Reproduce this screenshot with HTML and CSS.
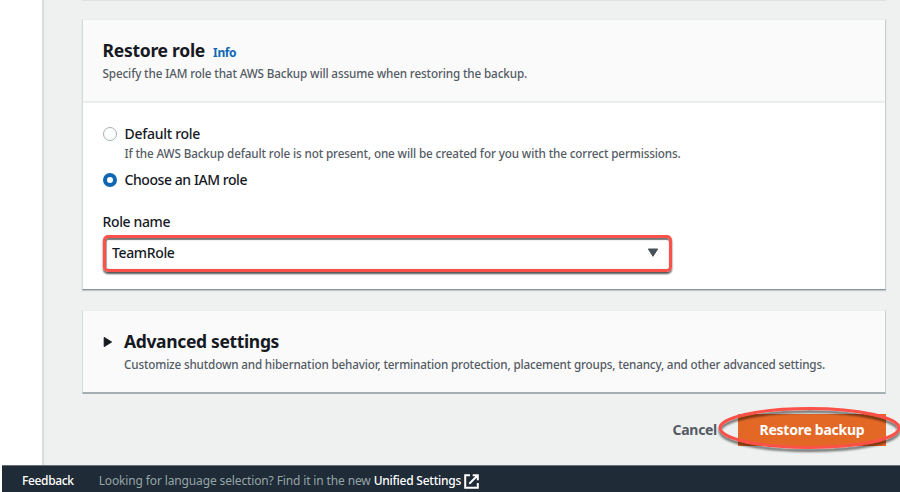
FILE: index.html
```html
<!DOCTYPE html>
<html lang="en">
<head>
<meta charset="utf-8">
<title>Restore backup</title>
<link rel="stylesheet" href="styles.css">
</head>
<body>
<div class="shell">
  <aside class="side"></aside>
  <main class="content">
    <div class="previous-edge"></div>
    <section class="panel role">
      <header class="panel-head">
        <div class="title-row"><h2>Restore role</h2><a class="info">Info</a></div>
        <p class="hint role-hint">Specify the IAM role that AWS Backup will assume when restoring the backup.</p>
      </header>
      <div class="panel-body">
        <div class="option"><span class="radio"></span><span class="label default-label">Default role</span></div>
        <p class="hint option-hint">If the AWS Backup default role is not present, one will be created for you with the correct permissions.</p>
        <div class="option"><span class="radio checked"></span><span class="label choose-label">Choose an IAM role</span></div>
        <div class="label field-label">Role name</div>
        <div class="select">
          <span class="label value">TeamRole</span>
          <svg width="12" height="10" viewBox="0 0 12 10"><path d="M1.3 1h9.4L6 8.3z" fill="#485058" stroke="#485058" stroke-linejoin="round"/></svg>
        </div>
      </div>
    </section>
    <section class="panel advanced">
      <svg class="caret" width="10" height="12" viewBox="0 0 10 12"><path d="M1.2 1.4v9.2L8.6 6z" fill="#16191f" stroke="#16191f" stroke-linejoin="round"/></svg>
      <div>
        <h2 class="adv-title">Advanced settings</h2>
        <p class="hint adv-hint">Customize shutdown and hibernation behavior, termination protection, placement groups, tenancy, and other advanced settings.</p>
      </div>
    </section>
    <div class="actions">
      <span class="cancel">Cancel</span>
      <div class="submit">
        <span class="submit-text">Restore backup</span>
        <svg class="ring" width="190" height="54" viewBox="0 0 190 54">
          <defs><filter id="shade" x="-10%" y="-20%" width="120%" height="150%"><feDropShadow dx="0" dy="3" stdDeviation="1" flood-color="#000" flood-opacity=".55"/></filter></defs>
          <ellipse cx="95.5" cy="25" rx="89.5" ry="19.4" fill="none" stroke="#fb5149" stroke-width="3" filter="url(#shade)"/>
        </svg>
      </div>
    </div>
  </main>
</div>
<footer class="footer">
  <span class="feedback">Feedback</span>
  <span class="language">Looking for language selection? Find it in the new</span>
  <span class="unified">Unified Settings</span>
  <svg class="external" width="15" height="15" viewBox="0 0 15 15" fill="none" stroke="#fff" stroke-width="2"><path d="M6 1.2H1.2v12.6h12.6V9"/><path d="M8.7 1.2h5.1v5.1M13.5 1.5L5.3 9.7"/></svg>
</footer>
</body>
</html>
```
FILE: styles.css
```css
* { box-sizing: border-box; }
body {
  margin: 0;
  width: 900px;
  height: 492px;
  overflow: hidden;
  background: #fff;
  color: #16191f;
  font: 500 14px/20px "Noto Sans", sans-serif;
}
h2, p { margin: 0; }
.shell { display: flex; height: 465px; }
.side { width: 44px; flex: none; border-right: 2px solid #d9dcdc; background: #fff; }
.content { flex: 1; background: #eff1f1; padding: 0 14px 0 38px; }
.previous-edge { height: 1px; background: #dfe1e1; margin-bottom: 18px; }
.panel {
  background: #fafafa;
  border-left: 1px solid #d5d9d9;
  border-right: 1px solid #c9cfcf;
  border-top: 1px solid #eaeded;
  border-bottom: 1px solid #879596;
  box-shadow: 0 1px 1px #c3c8ca;
}
.role { height: 271px; }
.panel-head { height: 83px; padding: 18px 20px 0 19.5px; border-bottom: 2px solid #eaeeee; }
.title-row { display: flex; align-items: baseline; gap: 8px; }
h2 { font-size: 17.5px; line-height: 24px; font-weight: 700; letter-spacing: -.27px; }
.info { font-size: 12px; font-weight: 700; color: #0f68b5; letter-spacing: -.35px; }
.hint { font-size: 11.7px; line-height: 18px; color: #545b64; white-space: nowrap; }
.role-hint { letter-spacing: -.13px; margin-top: 1px; }
.panel-body { background: #fff; height: 186px; padding: 21px 20px 0 19.5px; }
.option { display: flex; align-items: center; gap: 8px; height: 20px; }
.radio { width: 14px; height: 14px; border: 1px solid #a5b0b0; border-radius: 50%; background: #fff; }
.radio.checked { border: 4.5px solid #1166b4; }
.default-label { letter-spacing: -.27px; }
.choose-label { letter-spacing: -.43px; }
.option-hint { margin: 0 0 8px 22px; letter-spacing: -.125px; }
.field-label { margin-top: 22px; letter-spacing: -.37px; }
.select {
  display: flex;
  align-items: center;
  justify-content: space-between;
  width: 569px;
  height: 37px;
  margin: 3px 0 0 .5px;
  padding: 0 10px 1px 6px;
  border: 3px solid #fb5149;
  border-radius: 5px;
  box-shadow: 0 2px 2px #555, inset 0 2px 1px #777, inset 1px 0 1px #aaa;
}
.value { letter-spacing: -.36px; }
.advanced { display: flex; height: 84px; margin-top: 20px; padding: 18px 0 0 20px; border-bottom: 2px solid #a5aeb1; box-shadow: none; }
.caret { margin: 7px 11px 0 0; flex: none; }
.adv-title { letter-spacing: -.35px; }
.adv-hint { letter-spacing: -.165px; margin-top: 2px; }
.actions { display: flex; justify-content: flex-end; align-items: center; margin-top: 20px; height: 32px; font-weight: 700; }
.cancel { color: #545b64; margin-right: 21px; letter-spacing: -.3px; }
.submit { position: relative; width: 148px; height: 32px; background: #e46825; color: #fff; text-align: center; line-height: 32px; }
.submit-text { letter-spacing: -.26px; }
.ring { position: absolute; left: -24px; top: -11px; }
.footer {
  display: flex;
  align-items: center;
  height: 27px;
  margin-left: 2px;
  padding: 4px 0 0 20px;
  border-top: 1px solid #687078;
  background: #202b38;
  color: #fff;
  font-size: 12px;
}
.feedback { letter-spacing: -.35px; margin-right: 25px; }
.language { color: #95a5a6; font-weight: 400; letter-spacing: -.135px; margin-right: 3px; }
.unified { letter-spacing: -.24px; margin-right: 3px; }
```
